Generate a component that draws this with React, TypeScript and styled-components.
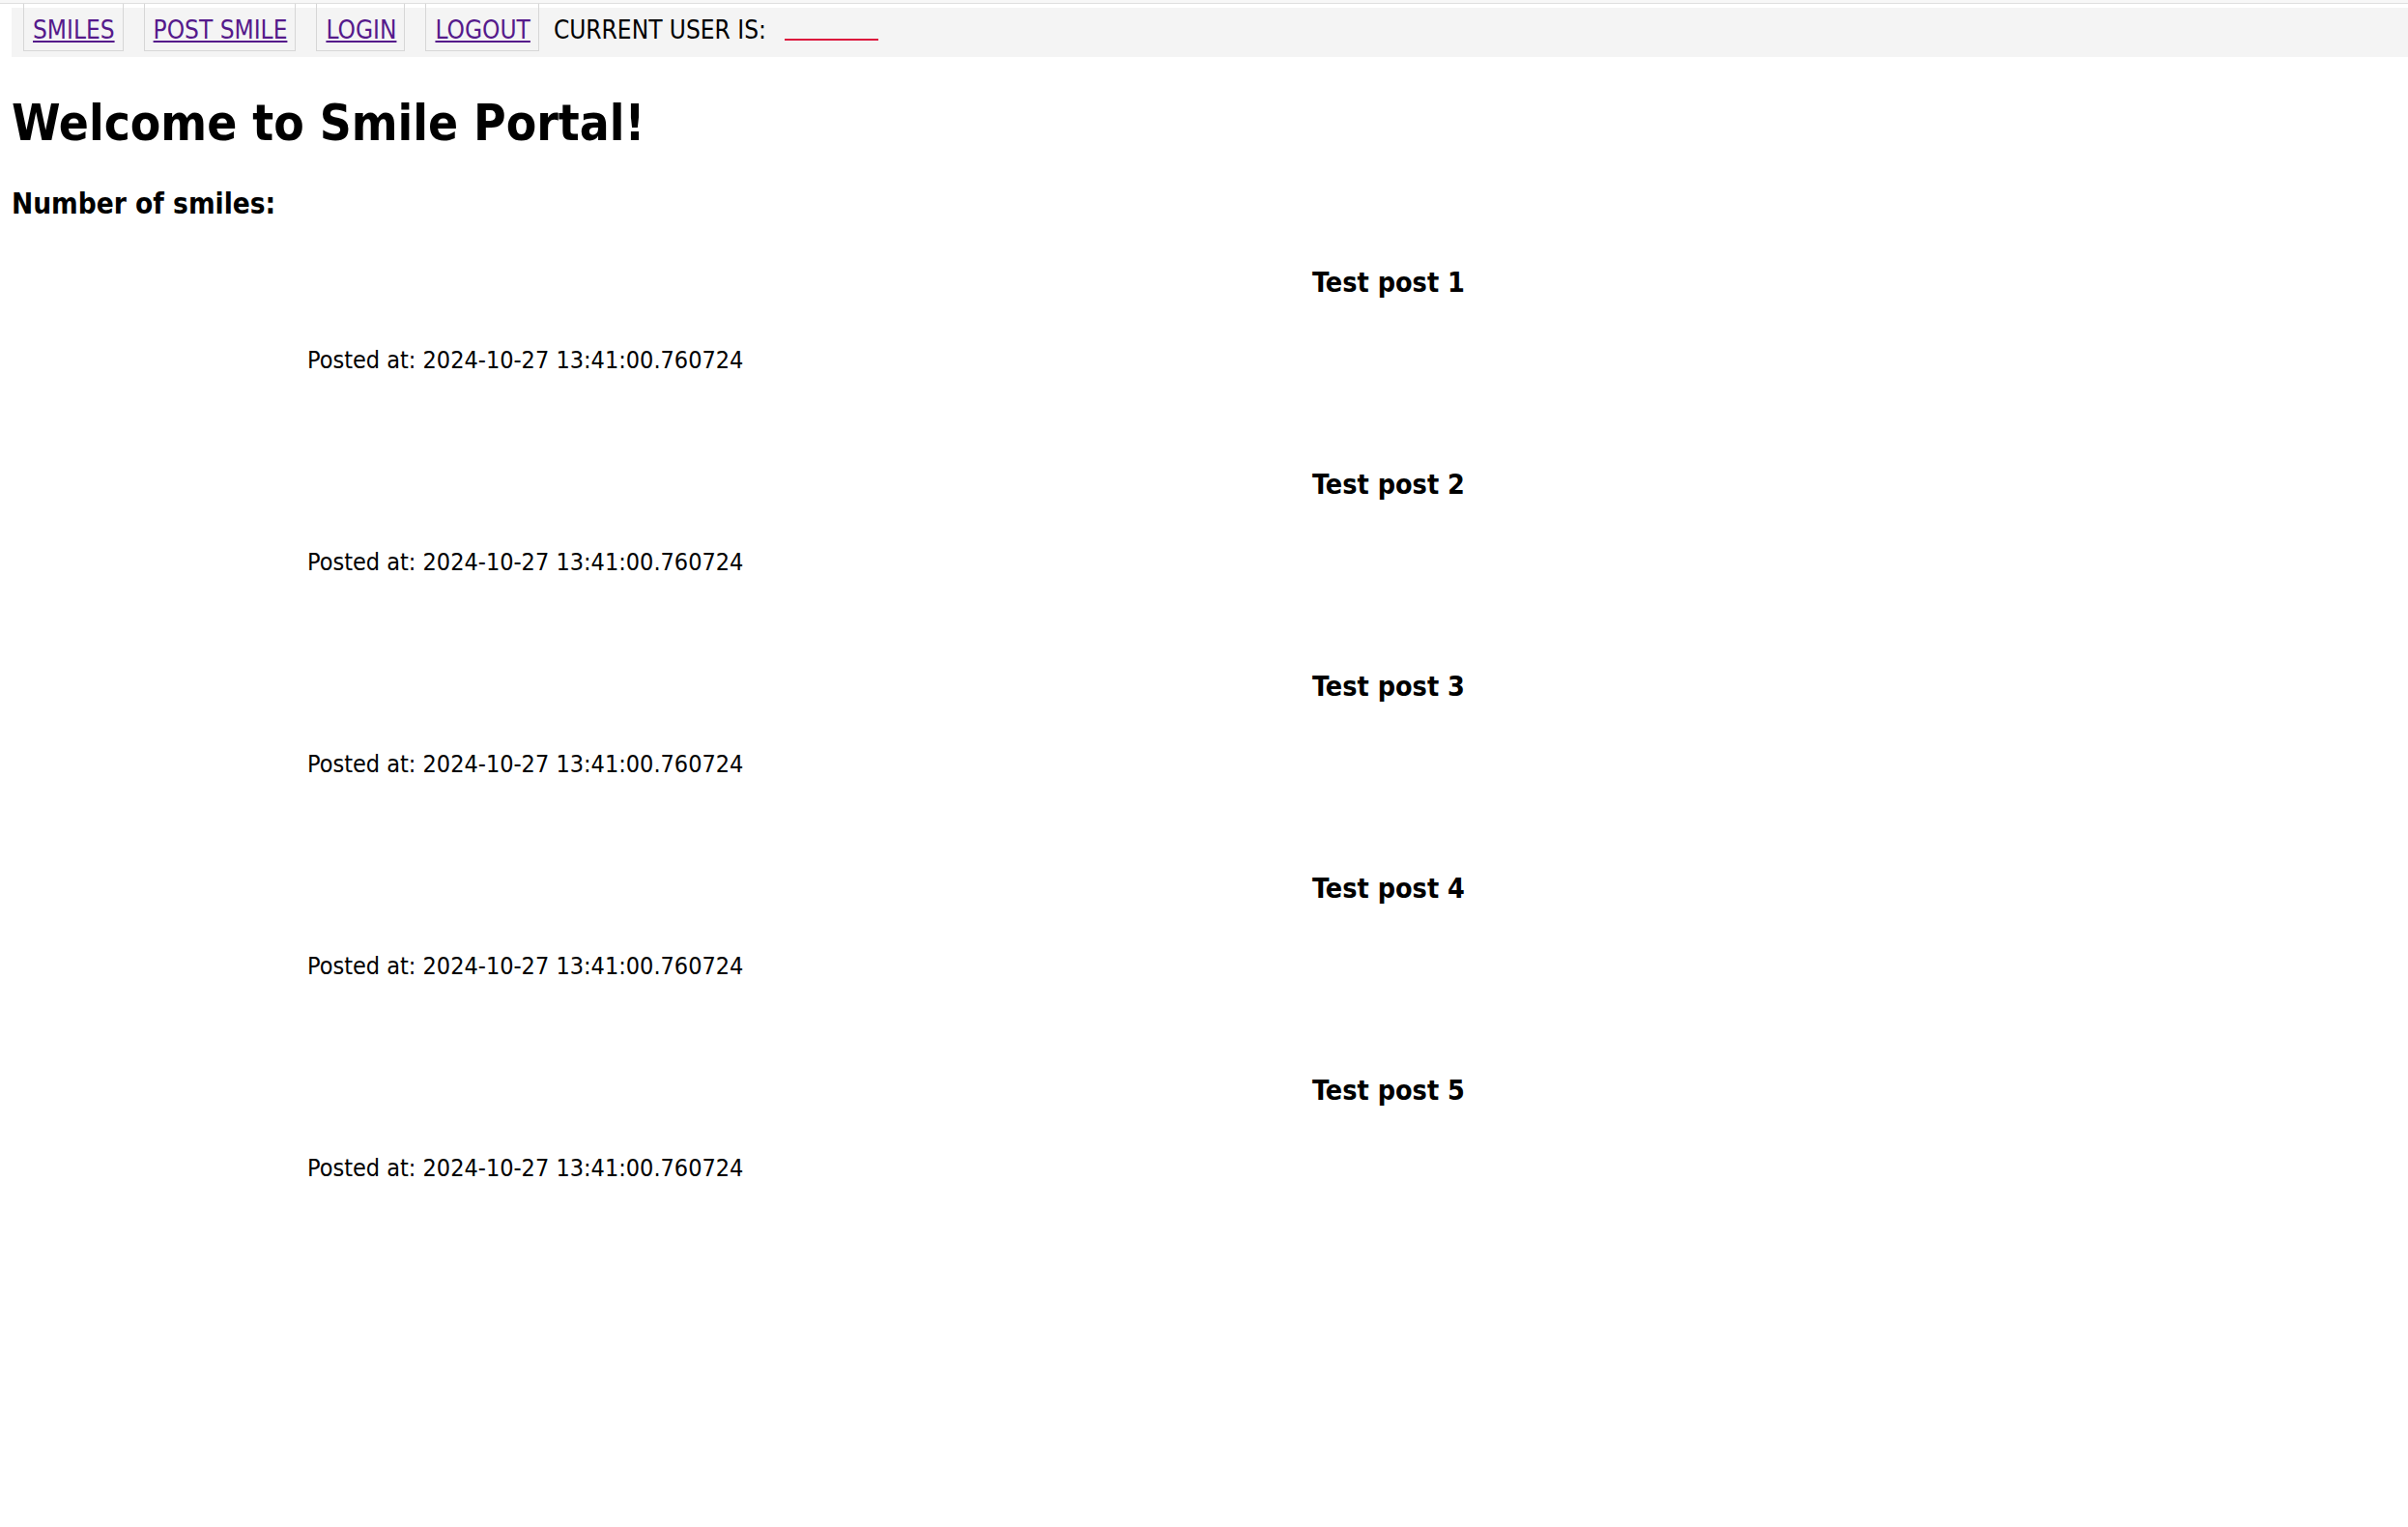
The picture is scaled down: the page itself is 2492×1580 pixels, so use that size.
import * as React from 'react'
import styled, { createGlobalStyle } from 'styled-components'

const GlobalStyle = createGlobalStyle`
	html, body {
		margin: 0;
		padding: 0;
		background: #ffffff;
	}
	body {
		font-family: "DejaVu Sans Condensed", "DejaVu Sans", Verdana, sans-serif;
		font-stretch: condensed;
		font-size: 26px;
		color: #000000;
	}
`

const TopEdge = styled.div`
	height: 3px;
	background-color: #f7f7f7;
	border-bottom: 1px solid #dedede;
`

const NavBar = styled.nav`
	display: flex;
	align-items: flex-start;
	height: 51px;
	margin: 4px 0 0 12px;
	padding-left: 12px;
	background-color: #f4f4f4;
`

const NavLink = styled.a`
	display: flex;
	align-items: center;
	box-sizing: border-box;
	height: 49px;
	margin: -4px 21px 0 0;
	padding: 6px 8px 0 9px;
	border: 1px solid #d6d6d6;
	border-top: none;
	color: #551a8b;
	text-decoration: underline;
	line-height: 1;
	&:last-of-type {
		margin-right: 15px;
	}
`

const UserLabel = styled.span`
	display: flex;
	align-items: center;
	height: 45px;
	line-height: 1;
`

const UserName = styled.span`
	align-self: flex-start;
	width: 97px;
	height: 28px;
	margin: 4px 0 0 19px;
	border-bottom: 2px solid #dc143c;
`

const Main = styled.main`
	padding: 0 12px;
`

const Heading = styled.h1`
	margin: 40px 0 0;
	font-size: 51px;
	line-height: 58px;
	font-weight: bold;
`

const Counter = styled.h3`
	margin: 37px 0 0;
	font-size: 29.5px;
	line-height: 34px;
	font-weight: bold;
`

const PostList = styled.div`
	display: flex;
	flex-direction: column;
	gap: 98px;
	margin-top: 48px;
`

const Post = styled.div`
	display: grid;
	grid-template-columns: 306px 1fr;
	row-gap: 48px;
`

const PostTitle = styled.h3`
	grid-column: 2;
	margin: 0;
	padding-left: 76px;
	font-size: 28.5px;
	line-height: 34px;
	font-weight: bold;
	text-align: center;
`

const PostedAt = styled.p`
	grid-column: 2;
	margin: 0;
	font-size: 25px;
	line-height: 29px;
`

interface PostRecord {
	id: number
	title: string
	postedAt: string
}

const posts: PostRecord[] = [1, 2, 3, 4, 5].map(n => ({
	id: n,
	title: `Test post ${n}`,
	postedAt: '2024-10-27 13:41:00.760724',
}))

export default function App() {
	return (
		<>
			<GlobalStyle />
			<TopEdge />
			<NavBar>
				<NavLink href="#smiles">SMILES</NavLink>
				<NavLink href="#post">POST SMILE</NavLink>
				<NavLink href="#login">LOGIN</NavLink>
				<NavLink href="#logout">LOGOUT</NavLink>
				<UserLabel>
					CURRENT USER IS:
					<UserName />
				</UserLabel>
			</NavBar>
			<Main>
				<Heading>Welcome to Smile Portal!</Heading>
				<Counter>Number of smiles:</Counter>
				<PostList>
					{posts.map(post => (
						<Post key={post.id}>
							<PostTitle>{post.title}</PostTitle>
							<PostedAt>Posted at: {post.postedAt}</PostedAt>
						</Post>
					))}
				</PostList>
			</Main>
		</>
	)
}
